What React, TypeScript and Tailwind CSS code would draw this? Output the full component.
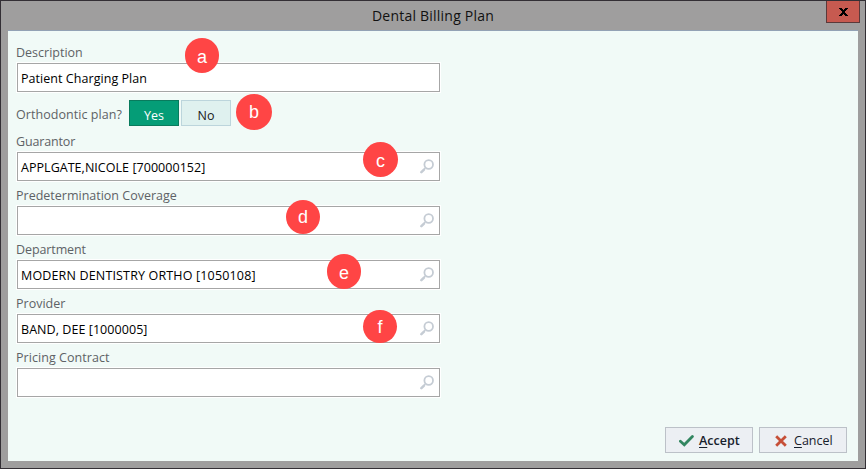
import type { ReactNode } from "react";

const SearchIcon = () => (
  <svg width="14" height="15" viewBox="0 0 14 15" fill="none" className="shrink-0">
    <circle cx="8.7" cy="5.5" r="4.3" stroke="#c5ccd4" strokeWidth="1.8" />
    <path d="M5.4 8.8 4.2 10" stroke="#c5ccd4" strokeWidth="1.4" />
    <path d="M4 10.6 1.4 13.2" stroke="#c5ccd4" strokeWidth="2.5" strokeLinecap="round" />
  </svg>
);

type MarkerProps = { className: string; children: ReactNode };

const Marker = ({ className, children }: MarkerProps) => (
  <span
    className={`absolute flex items-center justify-center rounded-full bg-[#ff4545] font-['Liberation_Sans',Arial,sans-serif] text-[18px] leading-none text-white ${className}`}
  >
    {children}
  </span>
);

type FieldProps = {
  label: string;
  labelClass?: string;
  value?: string;
  valueClass?: string;
  search?: boolean;
};

const Field = ({ label, labelClass = "", value = "", valueClass = "", search = true }: FieldProps) => (
  <div className="flex h-[54px] flex-col">
    <div className="flex h-[25px] items-center whitespace-nowrap pt-[5px] text-[#5e6266]">
      <span className={labelClass}>{label}</span>
    </div>
    <div className="ml-px flex h-[29px] w-[423px] items-center justify-between whitespace-nowrap border border-[#a6a6a6] bg-white pl-[3px] pr-[5px] text-black shadow-[0_0_0_1px_#ffffff]">
      <span className={`pt-[2px] ${valueClass}`}>{value}</span>
      {search && <SearchIcon />}
    </div>
  </div>
);

export default function App() {
  return (
    <div className="relative flex h-[469px] w-[866px] flex-col overflow-hidden border border-[#332f35] bg-[#9f9e9e] font-['Open_Sans','Noto_Sans',sans-serif] text-[12.5px] leading-[18px]">
      <header className="relative flex h-[29px] shrink-0 items-center justify-center">
        <h1 className="whitespace-nowrap text-[14px] tracking-[0.22px] text-[#111111]">Dental Billing Plan</h1>
        <button className="absolute -top-px right-[5px] flex h-[23px] w-[34px] items-center justify-center border border-[#5b393a] bg-[#c75a50]">
          <svg width="9" height="8" viewBox="0 0 9 8" shapeRendering="crispEdges">
            <path d="M0 0h3v1h1v1h1v-1h1v-1h3v1h-1v1h-1v1h-1v2h1v1h1v1h1v1h-3v-1h-1v-1h-1v1h-1v1h-3v-1h1v-1h1v-1h1v-2h-1v-1h-1v-1h-1z" fill="#000" />
          </svg>
        </button>
      </header>
      <main className="mx-[7px] mb-[7px] flex flex-1 flex-col border-t border-[#93a2b5] bg-[#f1faf7] pl-2 pt-[7px]">
        <Field label="Description" value="Patient Charging Plan" valueClass="tracking-[0.05px]" search={false} />
        <div className="flex h-[35px] items-start pt-2">
          <span className="w-[113px] whitespace-nowrap pt-[6px] tracking-[0.06px] text-[#5e6266]">Orthodontic plan?</span>
          <button className="flex h-[26px] w-[50px] items-center justify-center border border-[#097b5d] bg-[#059d77] pt-[5px] text-white">Yes</button>
          <button className="ml-[2px] flex h-[26px] w-[50px] items-center justify-center border border-[#bcd5dc] bg-[#dff1ef] pt-[5px] text-[#1b1b1b]">No</button>
        </div>
        <Field label="Guarantor" labelClass="-tracking-[0.15px]" value="APPLGATE,NICOLE [700000152]" valueClass="tracking-[0.04px]" />
        <Field label="Predetermination Coverage" />
        <Field label="Department" labelClass="-tracking-[0.1px]" value="MODERN DENTISTRY ORTHO [1050108]" valueClass="tracking-[0.16px]" />
        <Field label="Provider" value="BAND, DEE [1000005]" valueClass="tracking-[0.06px]" />
        <Field label="Pricing Contract" labelClass="tracking-[0.06px]" />
        <div className="mb-2 mr-[11px] mt-auto flex justify-end gap-[6px] text-[#17212c]">
          <button className="flex h-[26px] w-[88px] items-center border border-[#bcc1c8] bg-[#eceff3] pl-[13px] pt-px">
            <svg width="15" height="12" viewBox="0 0 15 12" fill="none">
              <path d="M1.4 6.2 5.3 9.7 13.4 1.5" stroke="#328660" strokeWidth="2.8" strokeLinecap="round" />
            </svg>
            <span className="ml-[5px] font-semibold"><u className="underline-offset-2">A</u>ccept</span>
          </button>
          <button className="flex h-[26px] w-[88px] items-center border border-[#bcc1c8] bg-[#eceff3] pl-[15px] pt-px">
            <svg width="12" height="12" viewBox="0 0 12 12" fill="none">
              <path d="M1.2 1.2 10.8 10.8M10.8 1.2 1.2 10.8" stroke="#c64f37" strokeWidth="2.8" />
            </svg>
            <span className="ml-[7px]"><u className="underline-offset-2">C</u>ancel</span>
          </button>
        </div>
      </main>
      <Marker className="left-[184px] top-[37px] h-[35px] w-[34px] pt-[2px]">a</Marker>
      <Marker className="left-[235px] top-[93px] h-[36px] w-[36px]">b</Marker>
      <Marker className="left-[362px] top-[141px] h-[35px] w-[35px] pt-[2px]">c</Marker>
      <Marker className="left-[285px] top-[199px] h-[34px] w-[34px]">d</Marker>
      <Marker className="left-[326px] top-[253px] h-[35px] w-[34px] pt-[2px]">e</Marker>
      <Marker className="left-[362px] top-[309px] h-[33px] w-[34px]">f</Marker>
    </div>
  );
}
